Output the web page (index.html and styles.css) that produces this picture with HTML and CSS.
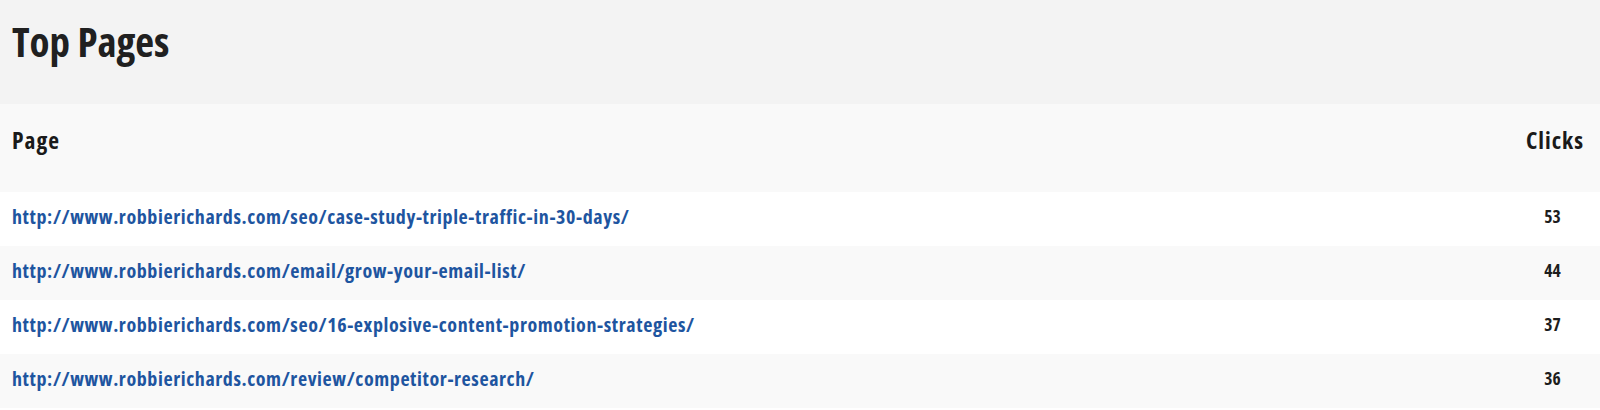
FILE: index.html
```html
<!DOCTYPE html>
<html lang="en">
<head>
<meta charset="utf-8">
<title>Top Pages</title>
<link rel="stylesheet" href="styles.css">
</head>
<body>
<section class="panel">
  <header class="panel-head">
    <h2 class="panel-title">Top Pages</h2>
  </header>
  <table class="pages">
    <thead>
      <tr><th class="col-page">Page</th><th class="col-clicks">Clicks</th></tr>
    </thead>
    <tbody>
      <tr><td><a href="#">http://www.robbierichards.com/seo/case-study-triple-traffic-in-30-days/</a></td><td class="num">53</td></tr>
      <tr><td><a href="#">http://www.robbierichards.com/email/grow-your-email-list/</a></td><td class="num">44</td></tr>
      <tr><td><a href="#">http://www.robbierichards.com/seo/16-explosive-content-promotion-strategies/</a></td><td class="num">37</td></tr>
      <tr><td><a href="#">http://www.robbierichards.com/review/competitor-research/</a></td><td class="num">36</td></tr>
    </tbody>
  </table>
</section>
</body>
</html>
```
FILE: styles.css
```css
html, body {
  margin: 0;
  padding: 0;
  background: #ffffff;
}
body {
  font-family: "Open Sans", "Liberation Sans", sans-serif;
  font-stretch: 75%;
  color: #1d1d1d;
}
.panel {
  width: 1600px;
}
.panel-head {
  background: #f3f3f3;
  height: 104px;
  padding: 21px 12px 0;
  box-sizing: border-box;
}
.panel-title {
  margin: 0;
  font-size: 41px;
  font-weight: 700;
  line-height: 1;
  color: #202020;
}
.pages {
  width: 100%;
  border-collapse: collapse;
}
.pages th {
  background: #f9f9f9;
  height: 88px;
  box-sizing: border-box;
  font-size: 23.5px;
  font-weight: 700;
  letter-spacing: 1px;
  line-height: 1;
  color: #1a1a1a;
  padding: 25px 12px 39px;
  vertical-align: top;
}
.col-page { text-align: left; }
.pages th.col-clicks { text-align: right; padding-right: 16px; }
.pages td {
  height: 54px;
  box-sizing: border-box;
  padding: 0 12px 6px;
  font-size: 20px;
  font-weight: 700;
  letter-spacing: 0.6px;
  vertical-align: middle;
}
.pages tbody tr:nth-child(odd) td { background: #ffffff; }
.pages tbody tr:nth-child(even) td { background: #f9f9f9; }
.pages a {
  color: #1e55a0;
  text-decoration: none;
}
.pages td.num {
  text-align: right;
  font-size: 17.5px;
  letter-spacing: 0.2px;
  color: #1d1d1d;
  padding-right: 39px;
}
```
